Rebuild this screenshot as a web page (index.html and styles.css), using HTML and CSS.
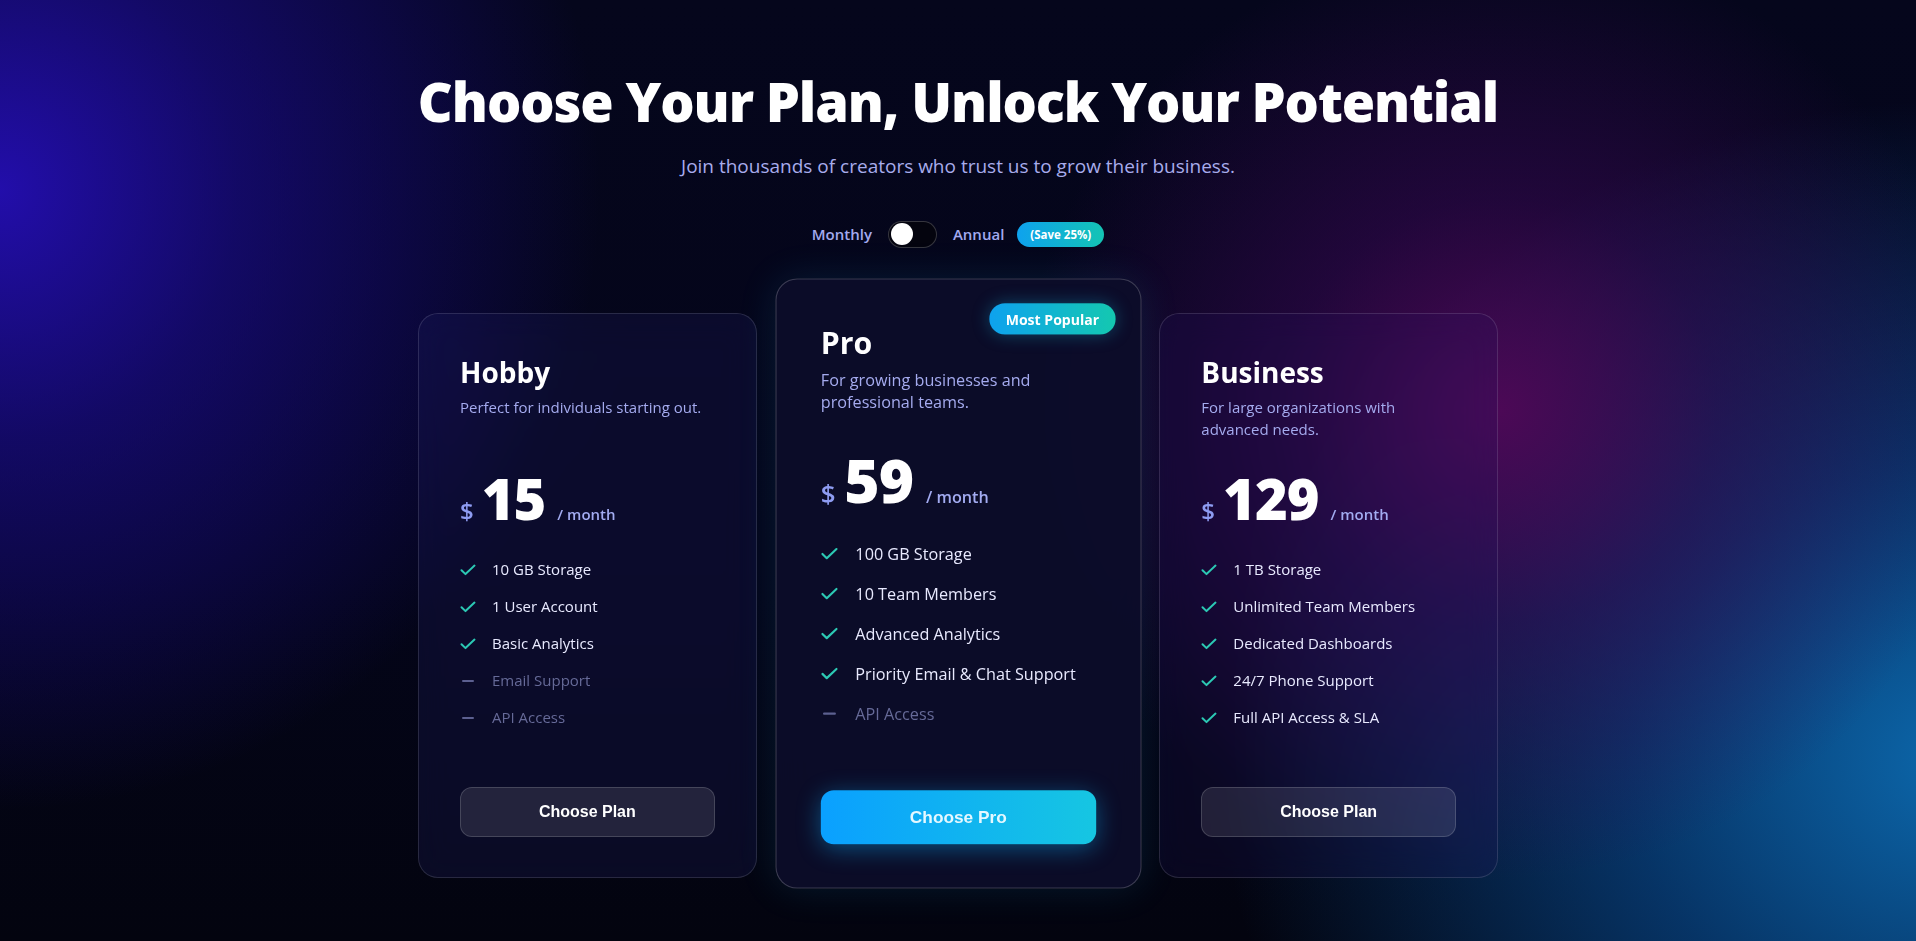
FILE: index.html
```html
<!DOCTYPE html>
<html lang="en">
<head>
<meta charset="utf-8">
<title>Pricing</title>
<link rel="stylesheet" href="styles.css">
</head>
<body>
<main class="page">
  <header class="hero">
    <h1 class="hero-title">Choose Your Plan, Unlock Your Potential</h1>
    <p class="hero-sub">Join thousands of creators who trust us to grow their business.</p>
    <div class="billing">
      <span class="billing-label">Monthly</span>
      <span class="switch"><span class="switch-knob"></span></span>
      <span class="billing-label">Annual</span>
      <span class="save-badge">(Save 25%)</span>
    </div>
  </header>

  <section class="plans">
    <article class="plan">
      <h2 class="plan-name">Hobby</h2>
      <p class="plan-desc">Perfect for individuals starting out.</p>
      <div class="plan-price"><span class="currency">$</span><span class="amount">15</span><span class="period">/ month</span></div>
      <ul class="features">
        <li class="feature"><svg class="icon-check" viewBox="0 0 16 16"><path d="M1.5 8.2l4 3.9L14.5 3.6"/></svg>10 GB Storage</li>
        <li class="feature"><svg class="icon-check" viewBox="0 0 16 16"><path d="M1.5 8.2l4 3.9L14.5 3.6"/></svg>1 User Account</li>
        <li class="feature"><svg class="icon-check" viewBox="0 0 16 16"><path d="M1.5 8.2l4 3.9L14.5 3.6"/></svg>Basic Analytics</li>
        <li class="feature is-off"><span class="icon-dash"></span>Email Support</li>
        <li class="feature is-off"><span class="icon-dash"></span>API Access</li>
      </ul>
      <button class="plan-btn">Choose Plan</button>
    </article>

    <article class="plan plan--featured">
      <span class="popular-badge">Most Popular</span>
      <h2 class="plan-name">Pro</h2>
      <p class="plan-desc">For growing businesses and professional teams.</p>
      <div class="plan-price"><span class="currency">$</span><span class="amount">59</span><span class="period">/ month</span></div>
      <ul class="features">
        <li class="feature"><svg class="icon-check" viewBox="0 0 16 16"><path d="M1.5 8.2l4 3.9L14.5 3.6"/></svg>100 GB Storage</li>
        <li class="feature"><svg class="icon-check" viewBox="0 0 16 16"><path d="M1.5 8.2l4 3.9L14.5 3.6"/></svg>10 Team Members</li>
        <li class="feature"><svg class="icon-check" viewBox="0 0 16 16"><path d="M1.5 8.2l4 3.9L14.5 3.6"/></svg>Advanced Analytics</li>
        <li class="feature"><svg class="icon-check" viewBox="0 0 16 16"><path d="M1.5 8.2l4 3.9L14.5 3.6"/></svg>Priority Email &amp; Chat Support</li>
        <li class="feature is-off"><span class="icon-dash"></span>API Access</li>
      </ul>
      <button class="plan-btn plan-btn--primary">Choose Pro</button>
    </article>

    <article class="plan plan--business">
      <h2 class="plan-name">Business</h2>
      <p class="plan-desc">For large organizations with advanced needs.</p>
      <div class="plan-price"><span class="currency">$</span><span class="amount">129</span><span class="period">/ month</span></div>
      <ul class="features">
        <li class="feature"><svg class="icon-check" viewBox="0 0 16 16"><path d="M1.5 8.2l4 3.9L14.5 3.6"/></svg>1 TB Storage</li>
        <li class="feature"><svg class="icon-check" viewBox="0 0 16 16"><path d="M1.5 8.2l4 3.9L14.5 3.6"/></svg>Unlimited Team Members</li>
        <li class="feature"><svg class="icon-check" viewBox="0 0 16 16"><path d="M1.5 8.2l4 3.9L14.5 3.6"/></svg>Dedicated Dashboards</li>
        <li class="feature"><svg class="icon-check" viewBox="0 0 16 16"><path d="M1.5 8.2l4 3.9L14.5 3.6"/></svg>24/7 Phone Support</li>
        <li class="feature"><svg class="icon-check" viewBox="0 0 16 16"><path d="M1.5 8.2l4 3.9L14.5 3.6"/></svg>Full API Access &amp; SLA</li>
      </ul>
      <button class="plan-btn">Choose Plan</button>
    </article>
  </section>
</main>
</body>
</html>
```

FILE: styles.css
```css
* {
  box-sizing: border-box;
  margin: 0;
  padding: 0;
}

html, body {
  height: 100%;
}

body {
  font-family: "Open Sans", "Noto Sans", sans-serif;
  color: #ffffff;
  overflow: hidden;
  background-color: #04051a;
  background-image:
    radial-gradient(ellipse 600px 620px at 0px 190px, rgba(36, 14, 178, 0.95) 0%, rgba(28, 12, 150, 0.6) 40%, rgba(10, 8, 60, 0) 100%),
    radial-gradient(ellipse 480px 470px at 1500px 410px, rgba(80, 8, 88, 0.95) 0%, rgba(56, 8, 84, 0.55) 45%, rgba(10, 8, 40, 0) 100%),
    radial-gradient(ellipse 740px 660px at 1960px 760px, rgba(12, 104, 172, 1) 0%, rgba(8, 72, 138, 0.7) 45%, rgba(4, 10, 40, 0) 100%),
    linear-gradient(180deg, #05061c 0%, #04051a 60%, #03040f 100%);
}

.page {
  display: flex;
  flex-direction: column;
  align-items: center;
  padding-top: 69px;
}

.hero {
  display: flex;
  flex-direction: column;
  align-items: center;
  text-align: center;
}

.hero-title {
  font-size: 54px;
  font-weight: 800;
  line-height: 1.2;
  letter-spacing: -1.1px;
  color: #ffffff;
}

.hero-sub {
  margin-top: 19px;
  font-size: 19px;
  line-height: 27px;
  color: #a8acec;
}

.billing {
  margin-top: 41px;
  display: flex;
  align-items: center;
  gap: 16px;
  height: 27px;
}

.billing-label {
  font-size: 15px;
  font-weight: 600;
  color: #a3aaf0;
}

.switch {
  width: 49px;
  height: 27px;
  border-radius: 999px;
  background: #04040e;
  border: 1px solid rgba(255, 255, 255, 0.2);
  display: flex;
  align-items: center;
  padding: 0 2px;
}

.switch-knob {
  width: 22px;
  height: 22px;
  border-radius: 50%;
  background: #ffffff;
}

.save-badge {
  margin-left: -3px;
  height: 25px;
  padding: 0 13px;
  border-radius: 999px;
  background: linear-gradient(90deg, #0ea2ee 0%, #14c4b4 100%);
  font-size: 11.5px;
  font-weight: 700;
  color: #ffffff;
  display: flex;
  align-items: center;
}

.plans {
  margin-top: 65px;
  width: 1080px;
  display: grid;
  grid-template-columns: repeat(3, 1fr);
  gap: 32px;
}

.plan {
  position: relative;
  display: flex;
  flex-direction: column;
  min-height: 565px;
  padding: 42px 41px 40px;
  border: 1px solid rgba(255, 255, 255, 0.13);
  border-radius: 20px;
  background: rgba(30, 32, 100, 0.25);
  backdrop-filter: blur(16px);
}

.plan--featured {
  transform: translateY(-12px) scale(1.08);
  background: rgba(12, 13, 42, 0.9);
  border-color: rgba(255, 255, 255, 0.2);
  box-shadow: 0 0 36px rgba(34, 190, 238, 0.12);
}

.plan--featured .plan-desc {
  line-height: 20.5px;
}

.plan--featured .features {
  margin-top: 29px;
}

.plan--business {
  background: rgba(34, 20, 96, 0.2);
}

.popular-badge {
  position: absolute;
  top: 22px;
  right: 23px;
  height: 29px;
  padding: 0 15px;
  border-radius: 999px;
  background: linear-gradient(90deg, #0ea2ee 0%, #14c8b0 100%);
  font-size: 13px;
  font-weight: 700;
  color: #ffffff;
  display: flex;
  align-items: center;
  box-shadow: 0 0 16px rgba(20, 180, 220, 0.35);
}

.plan-name {
  font-size: 28px;
  font-weight: 700;
  line-height: 1.2;
  color: #ffffff;
}

.plan-desc {
  margin-top: 7px;
  min-height: 44px;
  font-size: 15px;
  line-height: 22px;
  color: #a5abef;
}

.plan-price {
  margin-top: 30px;
  display: flex;
  align-items: baseline;
}

.currency {
  font-size: 24px;
  font-weight: 600;
  color: #8e9cf2;
  margin-right: 8px;
}

.amount {
  font-size: 56px;
  font-weight: 800;
  line-height: 1;
  letter-spacing: -1px;
  color: #ffffff;
}

.period {
  margin-left: 12px;
  font-size: 15px;
  font-weight: 600;
  color: #a3acf2;
}

.features {
  list-style: none;
  margin-top: 31px;
  display: flex;
  flex-direction: column;
  gap: 14px;
}

.feature {
  display: flex;
  align-items: center;
  gap: 16px;
  font-size: 15px;
  line-height: 23px;
  color: #e9eaff;
}

.feature.is-off {
  color: #666a98;
}

.icon-check {
  width: 16px;
  height: 16px;
  flex: none;
  fill: none;
  stroke: #2cc9b4;
  stroke-width: 2;
  stroke-linecap: round;
  stroke-linejoin: round;
}

.icon-dash {
  width: 16px;
  height: 16px;
  flex: none;
  display: flex;
  align-items: center;
  justify-content: center;
}

.icon-dash::before {
  content: "";
  width: 12px;
  height: 2px;
  border-radius: 1px;
  background: #5c6090;
}

.plan-btn {
  margin-top: auto;
  height: 50px;
  width: 100%;
  border-radius: 12px;
  border: 1px solid rgba(255, 255, 255, 0.16);
  background: rgba(255, 255, 255, 0.1);
  font-family: "Liberation Sans", Arial, sans-serif;
  font-size: 16px;
  font-weight: 700;
  color: #ffffff;
}

.plan-btn--primary {
  border: none;
  background: linear-gradient(90deg, #0aa0ff 0%, #16c6e2 100%);
  color: #e4f8ff;
  box-shadow: 0 4px 22px rgba(14, 165, 233, 0.45);
}
```
